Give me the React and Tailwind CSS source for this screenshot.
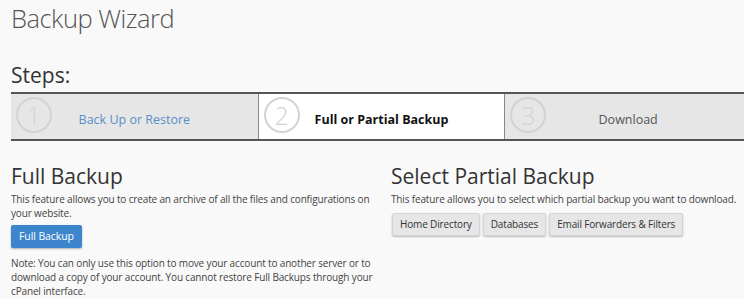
const steps = [
    { num: "1", label: "Back Up or Restore", cls: "text-[#5b8fc9]", active: false },
    { num: "2", label: "Full or Partial Backup", cls: "text-[#111] font-bold", active: true },
    { num: "3", label: "Download", cls: "text-[#555]", active: false },
];

const partials = ["Home Directory", "Databases", "Email Forwarders & Filters"];

const App = () => {
    const stepItems = steps.map((s, idx) => {
        return (
            <div key={s.num} className={`relative flex items-center justify-center h-full ${s.active ? "bg-white" : "bg-[#e6e6e6]"} ${idx > 0 ? "border-l border-[#888]" : ""}`}>
                <div className="absolute left-[5px] top-[3px] w-[36px] h-[36px] rounded-full border-[2px] border-[#d3d3d3] flex items-center justify-center text-[25px] font-light text-[#d3d3d3] leading-none">
                    {s.num}
                </div>
                <span className={`text-[12.5px] pt-[8px] ${s.cls}`}>{s.label}</span>
            </div>
        )
    })

    return (
        <div className="w-[744px] h-[299px] overflow-hidden bg-[#f9f9f9] text-[#333]" style={{ fontFamily: '"Open Sans", "Liberation Sans", sans-serif' }}>
            <h1 className="pl-[11px] pt-[1px] text-[25.5px] tracking-[-0.5px] font-light text-[#555] leading-[34px]">Backup Wizard</h1>
            <h2 className="pl-[11px] mt-[26px] text-[21px] text-[#333] leading-[28px]">Steps:</h2>
            <div className="ml-[11px] mt-[3px] w-[740px] h-[49px] border-y-[2px] border-[#555] grid grid-cols-3">
                {stepItems}
            </div>
            <div className="pl-[11px] mt-[20px] grid grid-cols-[380px_1fr]">
                <div className="w-[370px]">
                    <h3 className="text-[21px] leading-[30px] text-[#333]">Full Backup</h3>
                    <p className="text-[10px] tracking-[-0.15px] leading-[14px] text-[#444] mt-[1px]">This feature allows you to create an archive of all the files and configurations on your website.</p>
                    <button className="mt-[5px] h-[23px] px-[8px] bg-[#3d85cc] text-white text-[10.5px] tracking-[-0.1px] rounded-[2px] shadow-[0_1px_2px_rgba(0,0,0,0.3)]">Full Backup</button>
                    <p className="text-[10px] tracking-[-0.15px] leading-[14px] text-[#444] mt-[8px]">Note: You can only use this option to move your account to another server or to download a copy of your account. You cannot restore Full Backups through your cPanel interface.</p>
                </div>
                <div>
                    <h3 className="text-[21px] leading-[30px] text-[#333]">Select Partial Backup</h3>
                    <p className="text-[10px] tracking-[-0.15px] leading-[14px] text-[#444] mt-[1px]">This feature allows you to select which partial backup you want to download.</p>
                    <div className="flex gap-[3px] mt-[7px] ml-[1px]">
                        {partials.map((p) => (
                            <button key={p} className="h-[23px] px-[7px] bg-[#e6e6e6] border border-[#d4d4d4] text-[#333] text-[10px] tracking-[-0.15px] rounded-[2px] shadow-[0_1px_2px_rgba(0,0,0,0.25)]">{p}</button>
                        ))}
                    </div>
                </div>
            </div>
        </div>
    )
}

export default App
